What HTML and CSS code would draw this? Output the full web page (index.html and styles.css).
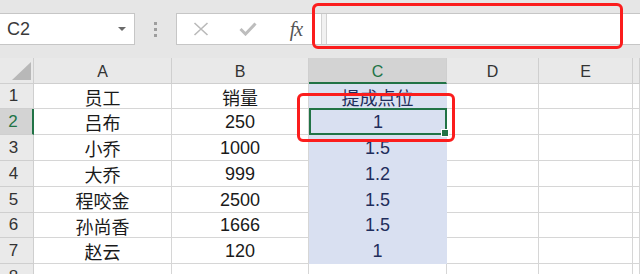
FILE: index.html
```html
<!DOCTYPE html>
<html lang="zh-CN">
<head>
    <meta charset="UTF-8">
    <meta name="viewport" content="width=device-width, initial-scale=1.0">
    <title>提成点位</title>
    <link rel="stylesheet" href="styles.css">
</head>
<body>
    <div class="toolbar">
        <div class="namebox">
            <span class="namebox-text">C2</span>
            <span class="caret"></span>
        </div>
        <div class="grip"><i></i><i></i><i></i></div>
        <div class="formula">
            <div class="fx-btn">
                <svg width="16" height="14" viewBox="0 0 16 14"><path d="M1.5 1 L14.5 13 M14.5 1 L1.5 13" stroke="#bababa" stroke-width="1.6" fill="none"/></svg>
            </div>
            <div class="fx-btn">
                <svg width="18" height="14" viewBox="0 0 18 14"><path d="M1.5 7 L6.5 12 L16.5 1.5" stroke="#bdbdbd" stroke-width="3" fill="none"/></svg>
            </div>
            <div class="fx-btn"><span class="fx">fx</span></div>
            <div class="split"></div>
            <div class="formula-input"></div>
        </div>
    </div>

    <div class="sheet">
        <div class="hd corner"></div>
        <div class="hd col">A</div>
        <div class="hd col">B</div>
        <div class="hd col active">C</div>
        <div class="hd col">D</div>
        <div class="hd col">E</div>
        <div class="hd col"></div>

        <div class="hd row">1</div>
        <div class="cell">员工</div>
        <div class="cell">销量</div>
        <div class="cell sel">提成点位</div>
        <div class="cell"></div><div class="cell"></div><div class="cell"></div>

        <div class="hd row active">2</div>
        <div class="cell">吕布</div>
        <div class="cell">250</div>
        <div class="cell sel current">1<span class="handle"></span></div>
        <div class="cell"></div><div class="cell"></div><div class="cell"></div>

        <div class="hd row">3</div>
        <div class="cell">小乔</div>
        <div class="cell">1000</div>
        <div class="cell sel">1.5</div>
        <div class="cell"></div><div class="cell"></div><div class="cell"></div>

        <div class="hd row">4</div>
        <div class="cell">大乔</div>
        <div class="cell">999</div>
        <div class="cell sel">1.2</div>
        <div class="cell"></div><div class="cell"></div><div class="cell"></div>

        <div class="hd row">5</div>
        <div class="cell">程咬金</div>
        <div class="cell">2500</div>
        <div class="cell sel">1.5</div>
        <div class="cell"></div><div class="cell"></div><div class="cell"></div>

        <div class="hd row">6</div>
        <div class="cell">孙尚香</div>
        <div class="cell">1666</div>
        <div class="cell sel">1.5</div>
        <div class="cell"></div><div class="cell"></div><div class="cell"></div>

        <div class="hd row">7</div>
        <div class="cell">赵云</div>
        <div class="cell">120</div>
        <div class="cell sel">1</div>
        <div class="cell"></div><div class="cell"></div><div class="cell"></div>

        <div class="hd row">8</div>
        <div class="cell"></div><div class="cell"></div><div class="cell"></div>
        <div class="cell"></div><div class="cell"></div><div class="cell"></div>
    </div>

    <div class="mark mark-formula"></div>
    <div class="mark mark-cell"></div>
</body>
</html>
```

FILE: styles.css
```css
body {
    margin: 0;
    width: 640px;
    height: 274px;
    overflow: hidden;
    position: relative;
    background-color: #fff;
    font-family: 'Liberation Sans', 'Noto Sans CJK SC', sans-serif;
    color: #1a1a1a;
}

.toolbar {
    height: 58px;
    box-sizing: border-box;
    padding-top: 13px;
    background-color: #e6e6e6;
    display: flex;
    align-items: flex-start;
}

.namebox {
    width: 135px;
    height: 32px;
    box-sizing: border-box;
    background-color: #fff;
    border: 1px solid #c6c6c6;
    border-left: none;
    display: flex;
    align-items: center;
    justify-content: space-between;
    padding: 0 8px 0 7px;
}

.namebox-text {
    font-size: 18px;
    color: #3a3a3a;
}

.caret {
    width: 0;
    height: 0;
    border-left: 4px solid transparent;
    border-right: 4px solid transparent;
    border-top: 4px solid #6a6a6a;
}

.grip {
    width: 41px;
    height: 32px;
    display: flex;
    flex-direction: column;
    align-items: center;
    justify-content: center;
    gap: 3px;
}

.grip i {
    display: block;
    width: 3px;
    height: 3px;
    background-color: #9e9e9e;
}

.formula {
    flex: 1;
    height: 32px;
    box-sizing: border-box;
    background-color: #fff;
    border: 1px solid #c6c6c6;
    border-right: none;
    display: flex;
}

.fx-btn {
    width: 48px;
    display: flex;
    align-items: center;
    justify-content: center;
}

.fx-btn:first-child {
    width: 47px;
}

.fx {
    font-family: 'Liberation Serif', serif;
    font-style: italic;
    font-size: 20px;
    color: #555;
    letter-spacing: -1px;
}

.split {
    width: 4px;
    margin-left: 1px;
    background-color: #f1f1f1;
    border-left: 1px solid #d2d2d2;
    border-right: 1px solid #d2d2d2;
}

.formula-input {
    flex: 1;
}

.sheet {
    display: grid;
    grid-template-columns: 34px 138px 137px 138px 92px 94px 1fr;
    grid-template-rows: 26px 25px 26px 26px 26px 26px 25px 26px 26px;
}

.hd {
    box-sizing: border-box;
    background-color: #e9e9e9;
    border-right: 1px solid #cfcfcf;
    border-bottom: 1px solid #cfcfcf;
    display: flex;
    align-items: center;
    justify-content: center;
    color: #333;
    font-size: 16px;
}

.hd.col {
    padding-top: 3px;
}

.hd.row {
    padding-right: 6px;
    font-size: 17px;
    background-color: #eaeaea;
}

.hd.active {
    background-color: #d3d3d3;
    color: #217346;
}

.hd.col.active {
    border-bottom: 2px solid #217346;
}

.hd.row.active {
    border-right: 2px solid #217346;
}

.corner {
    position: relative;
}

.corner::after {
    content: "";
    position: absolute;
    right: 2px;
    bottom: 3px;
    width: 19px;
    height: 18px;
    background-color: #b8b8b8;
    clip-path: polygon(100% 0, 100% 100%, 0 100%);
}

.cell {
    box-sizing: border-box;
    border-right: 1px solid #d6d6d6;
    border-bottom: 1px solid #d6d6d6;
    display: flex;
    align-items: center;
    justify-content: center;
    font-size: 18px;
    padding-top: 1px;
}

.cell.sel {
    background-color: #d9e0f1;
    border-color: #d9e0f1;
    color: #1f2d5c;
}

.cell.current {
    position: relative;
    border: 2px solid #217346;
    margin: -1px 0 0 0;
    height: 27px;
}

.handle {
    position: absolute;
    right: -4px;
    bottom: -4px;
    width: 6px;
    height: 6px;
    background-color: #217346;
    border: 1px solid #fff;
}

.mark {
    position: absolute;
    border: 3px solid #fb1d1d;
    border-radius: 6px;
    box-sizing: border-box;
    pointer-events: none;
}

.mark-formula {
    left: 312px;
    top: 3px;
    width: 311px;
    height: 46px;
}

.mark-cell {
    left: 297px;
    top: 93px;
    width: 158px;
    height: 49px;
}
```
